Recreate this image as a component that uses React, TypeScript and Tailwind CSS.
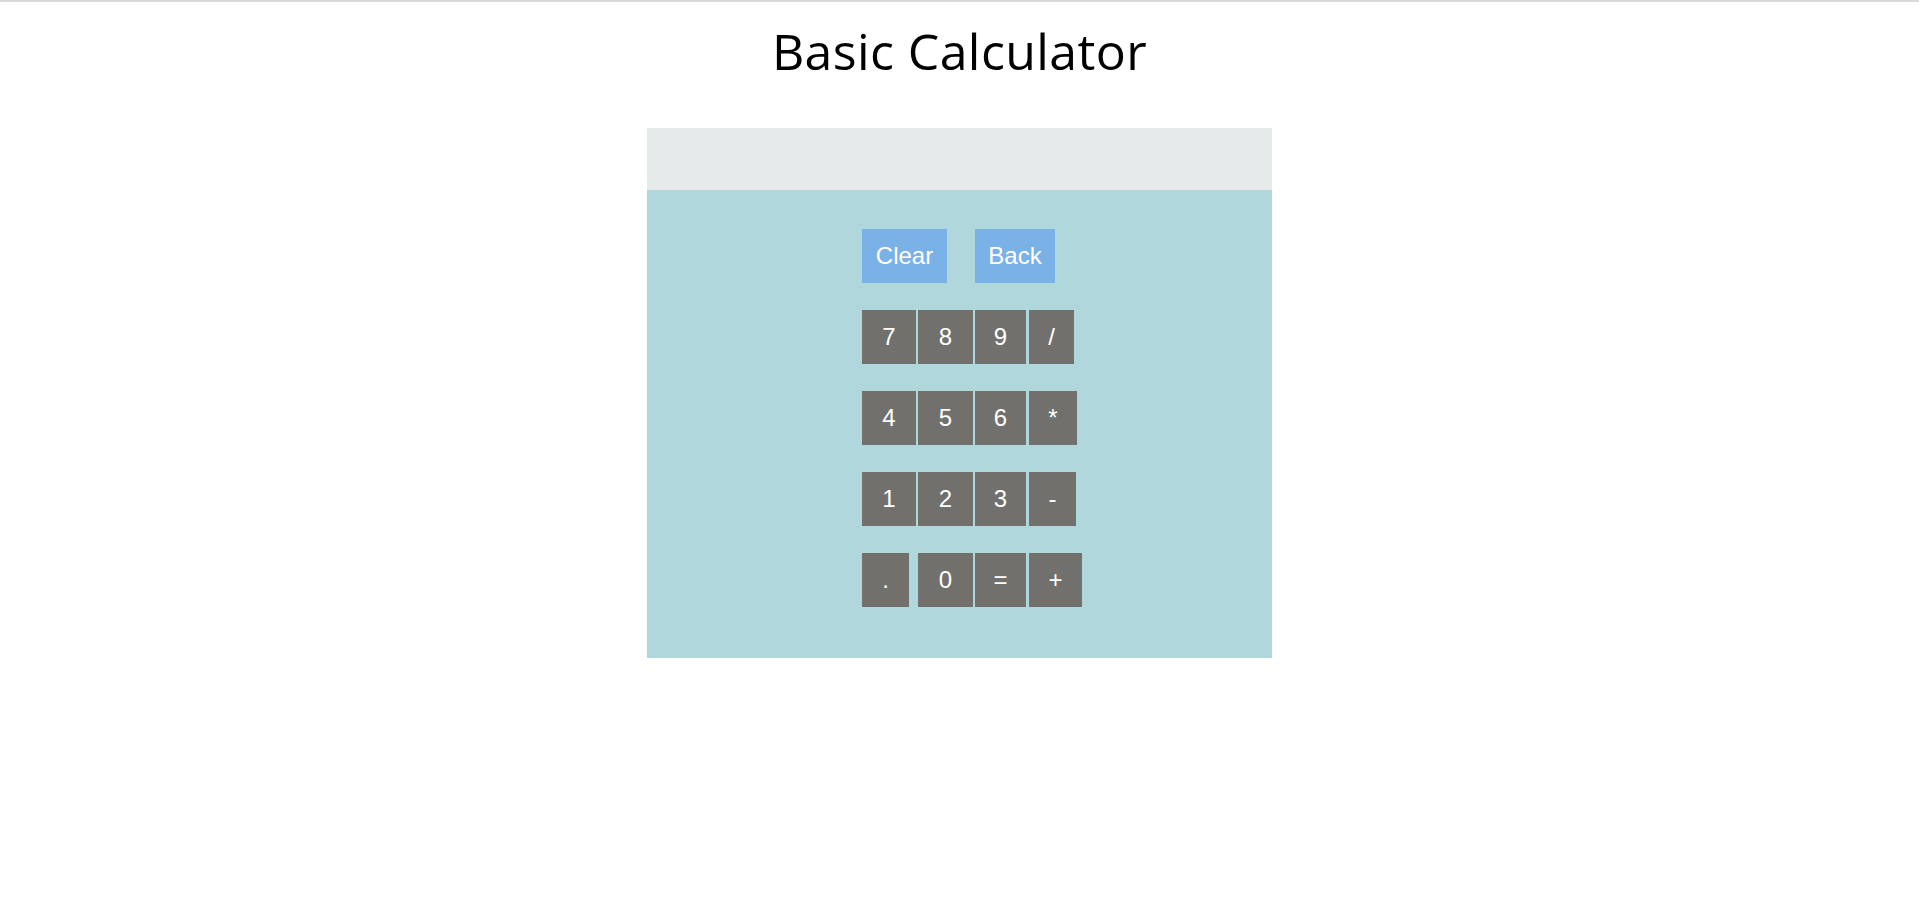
type Key = { label: string; w: string; ml: string };

const rows: Key[][] = [
  [
    { label: "7", w: "w-[54px]", ml: "ml-0" },
    { label: "8", w: "w-[55px]", ml: "ml-[2px]" },
    { label: "9", w: "w-[51px]", ml: "ml-[2px]" },
    { label: "/", w: "w-[45px]", ml: "ml-[3px]" },
  ],
  [
    { label: "4", w: "w-[54px]", ml: "ml-0" },
    { label: "5", w: "w-[55px]", ml: "ml-[2px]" },
    { label: "6", w: "w-[51px]", ml: "ml-[2px]" },
    { label: "*", w: "w-[48px]", ml: "ml-[3px]" },
  ],
  [
    { label: "1", w: "w-[54px]", ml: "ml-0" },
    { label: "2", w: "w-[55px]", ml: "ml-[2px]" },
    { label: "3", w: "w-[51px]", ml: "ml-[2px]" },
    { label: "-", w: "w-[47px]", ml: "ml-[3px]" },
  ],
  [
    { label: ".", w: "w-[47px]", ml: "ml-0" },
    { label: "0", w: "w-[55px]", ml: "ml-[9px]" },
    { label: "=", w: "w-[51px]", ml: "ml-[2px]" },
    { label: "+", w: "w-[53px]", ml: "ml-[3px]" },
  ],
];

const App = () => {
  return (
    <div className="min-h-screen bg-white">
      <div className="h-[2px] bg-[#dadada]" />

      {/* Title */}
      <h1 className="pt-[15px] text-center text-[50px] leading-[68px] tracking-[0.4px] text-black font-['Open_Sans',sans-serif]">
        Basic Calculator
      </h1>

      {/* Calculator */}
      <div className="mx-auto mt-[43px] w-[625px]">
        <div className="h-[62px] bg-[#e6eaeb]" />
        <div className="flex flex-col gap-[27px] bg-[#b0d8dc] pt-[39px] pb-[51px] pl-[215px] font-['Liberation_Sans',Arial,sans-serif] text-[24px] text-white">
          <div className="flex">
            <button className="h-[54px] w-[85px] bg-[#7ab1e6]">Clear</button>
            <button className="ml-[28px] h-[54px] w-[80px] bg-[#7ab1e6]">Back</button>
          </div>
          {rows.map((row, i) => (
            <div key={i} className="flex">
              {row.map((k) => (
                <button
                  key={k.label}
                  className={`h-[54px] ${k.w} ${k.ml} bg-[#72706c]`}
                >
                  {k.label}
                </button>
              ))}
            </div>
          ))}
        </div>
      </div>
    </div>
  );
};

export default App;
